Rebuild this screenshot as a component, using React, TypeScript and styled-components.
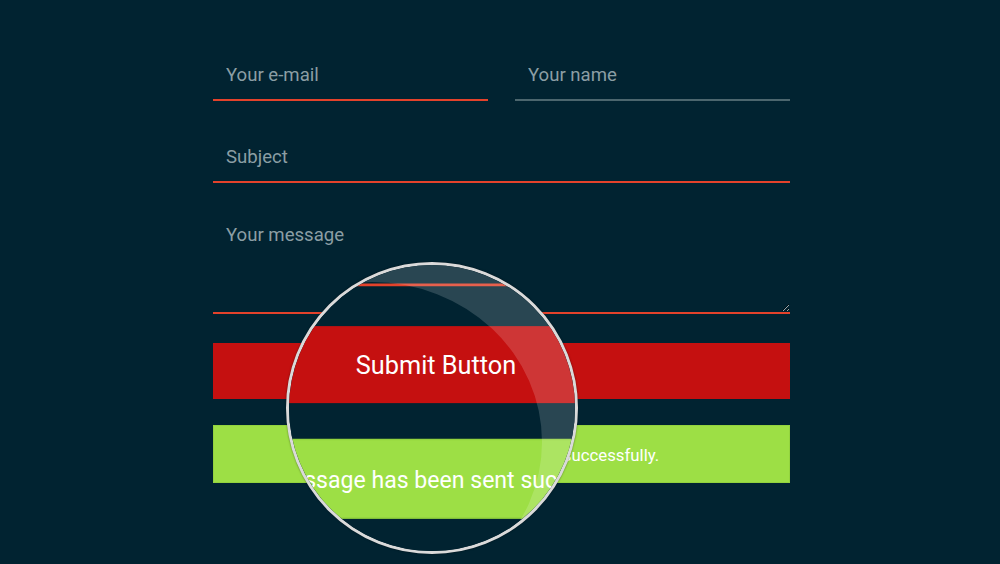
import React from "react";
import styled, { createGlobalStyle } from "styled-components";

const Global = createGlobalStyle`
  html, body { margin: 0; padding: 0; }
  body {
    background: #012331;
    font-family: Roboto, "Liberation Sans", sans-serif;
    width: 1000px;
    height: 564px;
    overflow: hidden;
  }
`;

const Page = styled.div`
  position: relative;
  width: 1000px;
  height: 564px;
  background: #012331;
  padding-top: 50px;
  box-sizing: border-box;
`;

const Form = styled.form`
  display: flex;
  flex-direction: column;
  width: 577px;
  margin-left: 213px;
`;

const Row = styled.div`
  display: grid;
  grid-template-columns: 1fr 1fr;
  column-gap: 27px;
`;

const fieldBase = `
  box-sizing: border-box;
  width: 100%;
  background: transparent;
  border: none;
  outline: none;
  color: #dfe7ea;
  font-family: Roboto, "Liberation Sans", sans-serif;
  font-size: 18.6px;
  padding: 0 13px;
  &::placeholder { color: #8b9ea4; opacity: 1; }
`;

const Field = styled.input<{ $accent?: boolean; $gap?: number }>`
  ${fieldBase}
  height: 51px;
  margin-top: ${(p) => p.$gap ?? 0}px;
  border-bottom: 2px solid ${(p) => (p.$accent ? "#e3422b" : "#4c666e")};
`;

const Message = styled.textarea`
  ${fieldBase}
  height: 100px;
  margin-top: 31px;
  padding-top: 10px;
  line-height: 22px;
  border-bottom: 2px solid #e3422b;
  resize: vertical;
  display: block;
`;

const SubmitButton = styled.button`
  margin-top: 29px;
  height: 56px;
  border: none;
  background: #c51010;
  color: #ffffff;
  font-family: Roboto, "Liberation Sans", sans-serif;
  font-size: 18.4px;
  cursor: pointer;
`;

const Success = styled.div`
  margin-top: 26px;
  height: 58px;
  box-sizing: border-box;
  background: #9ddf45;
  border: 1px solid #93d33e;
  color: #ffffff;
  font-size: 16.8px;
  padding-top: 2px;
  display: flex;
  align-items: center;
  justify-content: center;
`;

const ContactForm = () => (
  <Form onSubmit={(e) => e.preventDefault()}>
    <Row>
      <Field $accent placeholder="Your e-mail" tabIndex={-1} />
      <Field placeholder="Your name" tabIndex={-1} />
    </Row>
    <Field $accent $gap={31} placeholder="Subject" tabIndex={-1} />
    <Message placeholder="Your message" tabIndex={-1} />
    <SubmitButton type="submit" tabIndex={-1}>Submit Button</SubmitButton>
    <Success>Your message has been sent successfully.</Success>
  </Form>
);

/* Magnifying glass overlay */
const Lens = styled.div`
  position: absolute;
  left: 286px;
  top: 262px;
  width: 292px;
  height: 292px;
  box-sizing: border-box;
  border-radius: 50%;
  border: 3px solid #dadada;
  box-shadow: 0 0 2px rgba(0, 0, 0, 0.5), inset 0 0 1px rgba(0, 0, 0, 0.4);
  overflow: hidden;
  background: #012331;
`;

const Zoomed = styled.div`
  position: absolute;
  left: -289px;
  top: -265px;
  width: 1000px;
  height: 564px;
  transform-origin: 676px 388px;
  transform: scale(1.375);
  pointer-events: none;
`;

const Glare = styled.svg`
  position: absolute;
  left: -3px;
  top: -3px;
  width: 292px;
  height: 292px;
  pointer-events: none;
`;

export default function App() {
  return (
    <>
      <Global />
      <Page>
        <ContactForm />
        <Lens aria-hidden="true">
          <Zoomed>
            <Page>
              <ContactForm />
            </Page>
          </Zoomed>
          <Glare viewBox="0 0 292 292">
            <path
              fillRule="evenodd"
              fill="rgba(255,255,255,0.16)"
              d="M0 0H292V292H0Z M-84 180 a170 160 0 1 0 340 0 a170 160 0 1 0 -340 0Z"
            />
          </Glare>
        </Lens>
      </Page>
    </>
  );
}
